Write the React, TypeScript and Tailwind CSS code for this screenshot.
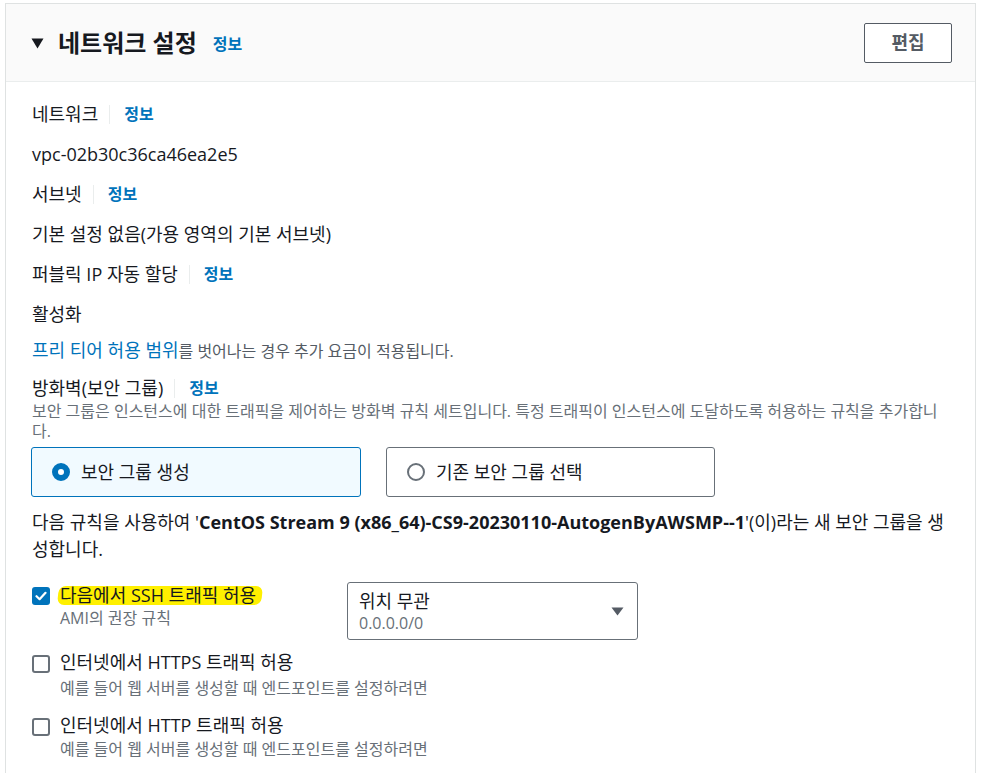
import React from 'react';

const font = { fontFamily: '"Open Sans", "Noto Sans CJK KR", sans-serif' };

const Info = () => (
  <span className="ml-[11px] border-l border-[#eaeded] pl-[14px] text-[16px] font-bold leading-[19px] text-[#0073bb]">정보</span>
);

const Label = ({ children }: { children: React.ReactNode }) => (
  <div className="flex h-[26px] items-center text-[18px] leading-[26px] text-[#16191f]">
    <span>{children}</span>
    <Info />
  </div>
);

const Value = ({ children }: { children: React.ReactNode }) => (
  <div className="mt-[14px] h-[26px] text-[18px] leading-[26px] text-[#16191f]">{children}</div>
);

const Check = ({ checked }: { checked?: boolean }) =>
  checked ? (
    <span className="flex h-[18px] w-[18px] shrink-0 items-center justify-center rounded-[3px] bg-[#0073bb]">
      <svg width="12" height="10" viewBox="0 0 12 10">
        <path d="M1.5 5.2 L4.6 8.2 L10.5 1.8" fill="none" stroke="#fff" strokeWidth="2.2" strokeLinecap="round" strokeLinejoin="round" />
      </svg>
    </span>
  ) : (
    <span className="block h-[18px] w-[18px] shrink-0 rounded-[3px] border-2 border-[#687078] bg-white" />
  );

export default function App() {
  return (
    <div className="min-h-screen bg-white pt-[3px]" style={font}>
      <div className="ml-[5px] w-[971px] border-l border-r border-t border-[#dfe2e2] bg-white">
        {/* header */}
        <div className="flex h-[78px] items-center justify-between border-b border-[#eaeded] bg-[#fafafa] pl-[25px] pr-[23px]">
          <div className="flex items-center">
            <svg width="13" height="11" viewBox="0 0 13 11" className="mt-[1px]">
              <path d="M0.5 0.5 H12.5 L6.5 10.5 Z" fill="#16191f" />
            </svg>
            <h2 className="ml-[14px] text-[24px] font-bold leading-[30px] text-[#16191f]">네트워크 설정</h2>
            <span className="ml-[16px] mt-[2px] text-[16px] font-bold text-[#0073bb]">정보</span>
          </div>
          <button className="h-[40px] w-[88px] rounded-[2px] border border-[#545b64] bg-white text-[18px] font-bold text-[#545b64]">
            편집
          </button>
        </div>

        {/* body */}
        <div className="px-[26px] pb-[20px] pt-[19px]">
          <Label>네트워크</Label>
          <Value>vpc-02b30c36ca46ea2e5</Value>

          <div className="mt-[14px]">
            <Label>서브넷</Label>
          </div>
          <Value>기본 설정 없음(가용 영역의 기본 서브넷)</Value>

          <div className="mt-[14px]">
            <Label>퍼블릭 IP 자동 할당</Label>
          </div>
          <Value>활성화</Value>

          <div className="mt-[10px] h-[26px] leading-[26px]">
            <span className="text-[18px] text-[#0073bb]">프리 티어 허용 범위</span>
            <span className="text-[16px] text-[#545b64]">를 벗어나는 경우 추가 요금이 적용됩니다.</span>
          </div>

          <div className="mt-[12px]">
            <Label>방화벽(보안 그룹)</Label>
          </div>
          <p className="text-[16px] leading-[20px] text-[#687078]">
            보안 그룹은 인스턴스에 대한 트래픽을 제어하는 방화벽 규칙 세트입니다. 특정 트래픽이 인스턴스에 도달하도록 허용하는 규칙을 추가합니다.
          </p>

          <div className="-ml-px mt-[6px] flex gap-[25px]">
            <div className="flex h-[50px] w-[330px] items-center rounded-[3px] border border-[#0073bb] bg-[#f1faff] pl-[20px]">
              <span className="h-[18px] w-[18px] rounded-full border-[6px] border-[#0073bb] bg-white" />
              <span className="ml-[11px] text-[18px] text-[#16191f]">보안 그룹 생성</span>
            </div>
            <div className="flex h-[50px] w-[329px] items-center rounded-[3px] border border-[#687078] bg-white pl-[20px]">
              <span className="h-[18px] w-[18px] rounded-full border-2 border-[#687078] bg-white" />
              <span className="ml-[11px] text-[18px] text-[#16191f]">기존 보안 그룹 선택</span>
            </div>
          </div>

          <p className="mt-[12px] text-[18px] leading-[27px] text-[#16191f]">
            다음 규칙을 사용하여 '<b>CentOS Stream 9 (x86_64)-CS9-20230110-AutogenByAWSMP--1</b>'(이)라는 새 보안 그룹을 생성합니다.
          </p>

          {/* rules */}
          <div className="mt-[19px] flex">
            <div className="flex w-[315px] items-start pt-[5px]">
              <Check checked />
              <div className="ml-[10px] -mt-[4px]">
                <div className="relative h-[24px] text-[18px] leading-[24px] text-[#16191f]">
                  <span className="absolute left-[-2px] right-[-6px] top-[3px] h-[19px] -skew-x-6 rounded-[7px] bg-[#fff000]" />
                  <span className="relative">다음에서 SSH 트래픽 허용</span>
                </div>
                <div className="mt-[1px] text-[16px] leading-[20px] text-[#687078]">AMI의 권장 규칙</div>
              </div>
            </div>
            <div className="flex h-[58px] w-[291px] items-center justify-between rounded-[3px] border border-[#687078] pl-[11px] pr-[13px]">
              <div>
                <div className="text-[18px] leading-[24px] text-[#16191f]">위치 무관</div>
                <div className="text-[16px] leading-[20px] text-[#687078]">0.0.0.0/0</div>
              </div>
              <svg width="13" height="9" viewBox="0 0 13 9">
                <path d="M0.5 0.5 H12.5 L6.5 8.5 Z" fill="#545b64" />
              </svg>
            </div>
          </div>

          <div className="mt-[10px] flex items-start">
            <span className="mt-[5px]">
              <Check />
            </span>
            <div className="ml-[10px]">
              <div className="text-[18px] leading-[24px] text-[#16191f]">인터넷에서 HTTPS 트래픽 허용</div>
              <div className="mt-[4px] text-[16px] leading-[20px] text-[#687078]">예를 들어 웹 서버를 생성할 때 엔드포인트를 설정하려면</div>
            </div>
          </div>

          <div className="mt-[15px] flex items-start">
            <span className="mt-[5px]">
              <Check />
            </span>
            <div className="ml-[10px]">
              <div className="text-[18px] leading-[24px] text-[#16191f]">인터넷에서 HTTP 트래픽 허용</div>
              <div className="mt-[2px] text-[16px] leading-[20px] text-[#687078]">예를 들어 웹 서버를 생성할 때 엔드포인트를 설정하려면</div>
            </div>
          </div>
        </div>
      </div>
    </div>
  );
}
